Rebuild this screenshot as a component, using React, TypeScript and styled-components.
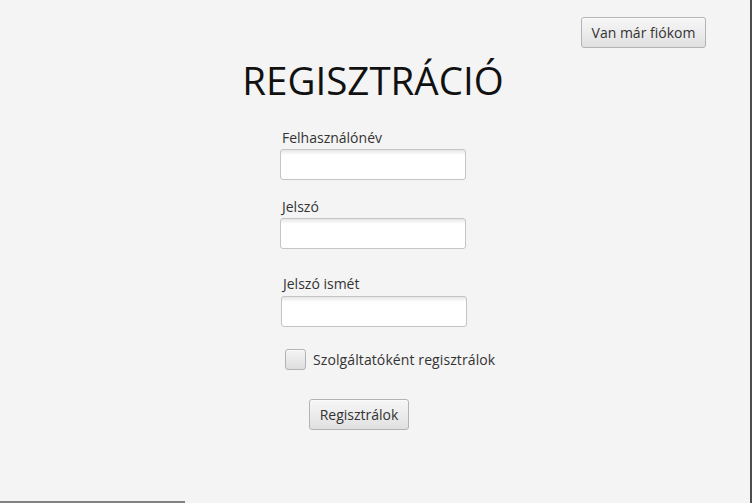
import React from 'react';
import styled, { createGlobalStyle } from 'styled-components';

const GlobalStyle = createGlobalStyle`
  html, body {
    margin: 0;
    padding: 0;
    background: #f4f4f4;
  }
  body {
    font-family: "Open Sans", "Noto Sans", sans-serif;
    color: #333333;
  }
`;

const Window = styled.div`
  width: 752px;
  height: 503px;
  box-sizing: border-box;
  background: #f4f4f4;
  border-right: 2px solid #4d4d4d;
  display: flex;
  flex-direction: column;
`;

const TopBar = styled.div`
  display: flex;
  justify-content: flex-end;
  padding: 17px 44px 0 0;
`;

const Button = styled.button<{ $width: number }>`
  width: ${p => p.$width}px;
  height: 31px;
  padding: 0;
  box-sizing: border-box;
  font-family: "Open Sans", "Noto Sans", sans-serif;
  font-size: 14px;
  color: #333333;
  border: 1px solid #b3b3b3;
  border-radius: 3px;
  background: linear-gradient(to bottom, #f6f6f6 0%, #ececec 50%, #e0e0e0 100%);
  box-shadow: inset 0 1px 0 #fbfbfb;
  cursor: pointer;
`;

const Title = styled.h1`
  margin: 10px 4px 0 0;
  font-size: 38.5px;
  line-height: 44px;
  font-weight: 400;
  text-align: center;
  color: #111111;
`;

const Form = styled.div`
  display: flex;
  flex-direction: column;
  align-items: flex-start;
  padding-left: 280px;
  margin-top: 27px;
`;

const Field = styled.div<{ $top: number; $indent?: number }>`
  display: flex;
  flex-direction: column;
  margin-top: ${p => p.$top}px;
  margin-left: ${p => p.$indent ?? 0}px;
`;

const Label = styled.label<{ $gap: number }>`
  font-size: 14px;
  line-height: 17px;
  margin: 0 0 ${p => p.$gap}px 2px;
`;

const Input = styled.input`
  width: 186px;
  height: 31px;
  box-sizing: border-box;
  border: 1px solid #c4c4c4;
  border-radius: 3px;
  background: linear-gradient(to bottom, #e6e6e6 0px, #ffffff 5px);
  outline: none;
  padding: 0 7px;
  font-family: "Open Sans", "Noto Sans", sans-serif;
  font-size: 14px;
`;

const CheckRow = styled.label`
  display: flex;
  align-items: center;
  gap: 7px;
  margin: 22px 0 0 5px;
  font-size: 14px;
  line-height: 17px;
  letter-spacing: 0.1px;
  cursor: pointer;
`;

const CheckBox = styled.span`
  width: 21px;
  height: 21px;
  box-sizing: border-box;
  border: 1px solid #b3b3b3;
  border-radius: 3px;
  background: linear-gradient(to bottom, #f4f4f4 0%, #e9e9e9 50%, #dedede 100%);
  box-shadow: inset 0 1px 0 #fafafa;
`;

const SubmitWrap = styled.div`
  margin: 29px 0 0 29px;
`;

const Spacer = styled.div`
  flex: 1;
`;

const BottomBar = styled.div`
  width: 185px;
  height: 2px;
  background: #808080;
`;

export default function App() {
  return (
    <>
      <GlobalStyle />
      <Window>
        <TopBar>
          <Button $width={125}>Van már fiókom</Button>
        </TopBar>
        <Title>REGISZTRÁCIÓ</Title>
        <Form>
          <Field $top={0}>
            <Label $gap={3}>Felhasználónév</Label>
            <Input type="text" />
          </Field>
          <Field $top={18}>
            <Label $gap={3}>Jelszó</Label>
            <Input type="password" />
          </Field>
          <Field $top={26} $indent={1}>
            <Label $gap={4}>Jelszó ismét</Label>
            <Input type="password" />
          </Field>
          <CheckRow>
            <CheckBox />
            Szolgáltatóként regisztrálok
          </CheckRow>
          <SubmitWrap>
            <Button $width={100}>Regisztrálok</Button>
          </SubmitWrap>
        </Form>
        <Spacer />
        <BottomBar />
      </Window>
    </>
  );
}
